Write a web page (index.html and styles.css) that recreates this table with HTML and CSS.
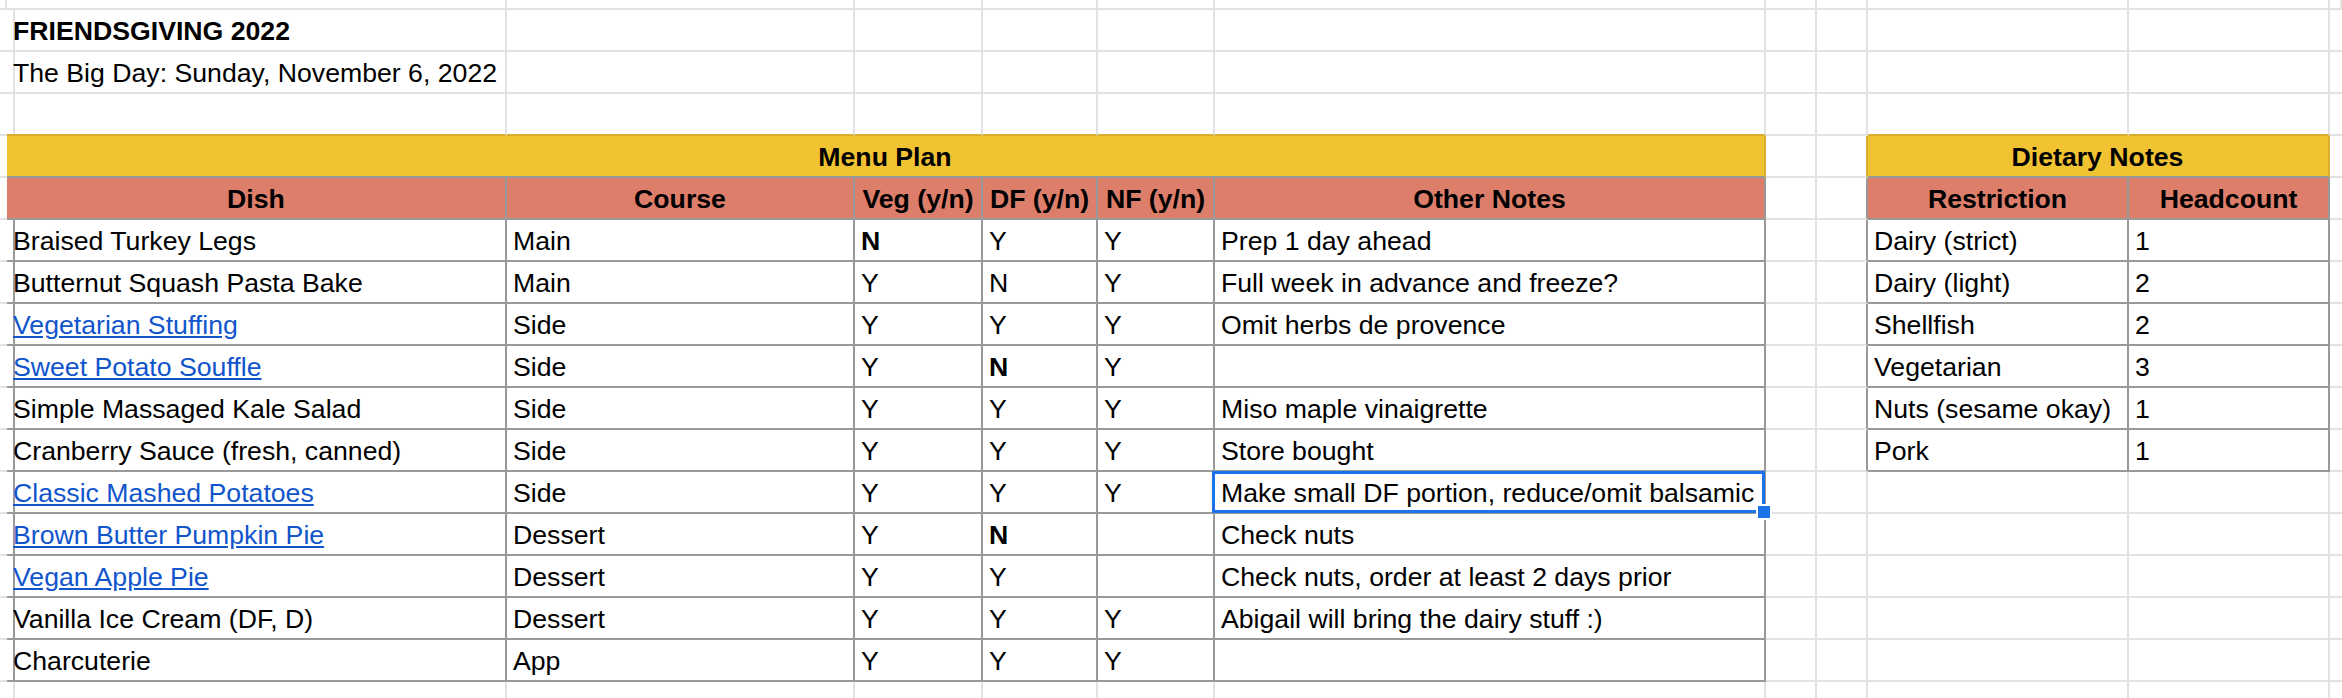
FILE: index.html
```html
<!DOCTYPE html>
<html lang="en">
<head>
<meta charset="utf-8">
<title>Friendsgiving 2022</title>
<link rel="stylesheet" href="styles.css">
</head>
<body>
<div class="sheet">
  <div class="row pre">
    <div class="c"></div><div class="c"></div><div class="c"></div><div class="c"></div><div class="c"></div><div class="c"></div><div class="c"></div><div class="c"></div><div class="c"></div><div class="c"></div><div class="c"></div><div class="c"></div>
  </div>
  <div class="row">
    <div class="c"></div><div class="c b">FRIENDSGIVING 2022</div><div class="c"></div><div class="c"></div><div class="c"></div><div class="c"></div><div class="c"></div><div class="c"></div><div class="c"></div><div class="c"></div><div class="c"></div><div class="c"></div>
  </div>
  <div class="row">
    <div class="c"></div><div class="c">The Big Day: Sunday, November 6, 2022</div><div class="c"></div><div class="c"></div><div class="c"></div><div class="c"></div><div class="c"></div><div class="c"></div><div class="c"></div><div class="c"></div><div class="c"></div><div class="c"></div>
  </div>
  <div class="row">
    <div class="c"></div><div class="c gt"></div><div class="c gt"></div><div class="c gt"></div><div class="c gt"></div><div class="c gt"></div><div class="c gt"></div><div class="c"></div><div class="c"></div><div class="c gt"></div><div class="c gt"></div><div class="c"></div>
  </div>
  <div class="row">
    <div class="c gl"></div><div class="c yl span6">Menu Plan</div><div class="c"></div><div class="c gl"></div><div class="c yl span2">Dietary Notes</div><div class="c"></div>
  </div>
  <div class="row">
    <div class="c gr"></div><div class="c sh">Dish</div><div class="c sh">Course</div><div class="c sh">Veg (y/n)</div><div class="c sh">DF (y/n)</div><div class="c sh">NF (y/n)</div><div class="c sh">Other Notes</div><div class="c"></div><div class="c gr"></div><div class="c sh">Restriction</div><div class="c sh">Headcount</div><div class="c"></div>
  </div>
  <div class="row">
    <div class="c gr"></div><div class="c t">Braised Turkey Legs</div><div class="c t">Main</div><div class="c t b">N</div><div class="c t">Y</div><div class="c t">Y</div><div class="c t">Prep 1 day ahead</div><div class="c"></div><div class="c gr"></div><div class="c t">Dairy (strict)</div><div class="c t">1</div><div class="c"></div>
  </div>
  <div class="row">
    <div class="c gr"></div><div class="c t">Butternut Squash Pasta Bake</div><div class="c t">Main</div><div class="c t">Y</div><div class="c t">N</div><div class="c t">Y</div><div class="c t">Full week in advance and freeze?</div><div class="c"></div><div class="c gr"></div><div class="c t">Dairy (light)</div><div class="c t">2</div><div class="c"></div>
  </div>
  <div class="row">
    <div class="c gr"></div><div class="c t"><a class="link" href="#">Vegetarian Stuffing</a></div><div class="c t">Side</div><div class="c t">Y</div><div class="c t">Y</div><div class="c t">Y</div><div class="c t">Omit herbs de provence</div><div class="c"></div><div class="c gr"></div><div class="c t">Shellfish</div><div class="c t">2</div><div class="c"></div>
  </div>
  <div class="row">
    <div class="c gr"></div><div class="c t"><a class="link" href="#">Sweet Potato Souffle</a></div><div class="c t">Side</div><div class="c t">Y</div><div class="c t b">N</div><div class="c t">Y</div><div class="c t"></div><div class="c"></div><div class="c gr"></div><div class="c t">Vegetarian</div><div class="c t">3</div><div class="c"></div>
  </div>
  <div class="row">
    <div class="c gr"></div><div class="c t">Simple Massaged Kale Salad</div><div class="c t">Side</div><div class="c t">Y</div><div class="c t">Y</div><div class="c t">Y</div><div class="c t">Miso maple vinaigrette</div><div class="c"></div><div class="c gr"></div><div class="c t">Nuts (sesame okay)</div><div class="c t">1</div><div class="c"></div>
  </div>
  <div class="row">
    <div class="c gr"></div><div class="c t">Cranberry Sauce (fresh, canned)</div><div class="c t">Side</div><div class="c t">Y</div><div class="c t">Y</div><div class="c t">Y</div><div class="c t">Store bought</div><div class="c"></div><div class="c gr"></div><div class="c t">Pork</div><div class="c t">1</div><div class="c"></div>
  </div>
  <div class="row">
    <div class="c gr"></div><div class="c t"><a class="link" href="#">Classic Mashed Potatoes</a></div><div class="c t">Side</div><div class="c t">Y</div><div class="c t">Y</div><div class="c t">Y</div><div class="c t sel">Make small DF portion, reduce/omit balsamic</div><div class="c"></div><div class="c"></div><div class="c"></div><div class="c"></div><div class="c"></div>
  </div>
  <div class="row">
    <div class="c gr"></div><div class="c t"><a class="link" href="#">Brown Butter Pumpkin Pie</a></div><div class="c t">Dessert</div><div class="c t">Y</div><div class="c t b">N</div><div class="c t"></div><div class="c t">Check nuts</div><div class="c"></div><div class="c"></div><div class="c"></div><div class="c"></div><div class="c"></div>
  </div>
  <div class="row">
    <div class="c gr"></div><div class="c t"><a class="link" href="#">Vegan Apple Pie</a></div><div class="c t">Dessert</div><div class="c t">Y</div><div class="c t">Y</div><div class="c t"></div><div class="c t">Check nuts, order at least 2 days prior</div><div class="c"></div><div class="c"></div><div class="c"></div><div class="c"></div><div class="c"></div>
  </div>
  <div class="row">
    <div class="c gr"></div><div class="c t">Vanilla Ice Cream (DF, D)</div><div class="c t">Dessert</div><div class="c t">Y</div><div class="c t">Y</div><div class="c t">Y</div><div class="c t">Abigail will bring the dairy stuff :)</div><div class="c"></div><div class="c"></div><div class="c"></div><div class="c"></div><div class="c"></div>
  </div>
  <div class="row">
    <div class="c gr"></div><div class="c t">Charcuterie</div><div class="c t">App</div><div class="c t">Y</div><div class="c t">Y</div><div class="c t">Y</div><div class="c t"></div><div class="c"></div><div class="c"></div><div class="c"></div><div class="c"></div><div class="c"></div>
  </div>
  <div class="row">
    <div class="c"></div><div class="c"></div><div class="c"></div><div class="c"></div><div class="c"></div><div class="c"></div><div class="c"></div><div class="c"></div><div class="c"></div><div class="c"></div><div class="c"></div><div class="c"></div>
  </div>
</div>
</body>
</html>
```

FILE: styles.css
```css
html, body {
  margin: 0;
  padding: 0;
  background: #ffffff;
  overflow: hidden;
}

body {
  width: 2342px;
  height: 698px;
  font-family: "Liberation Sans", Arial, sans-serif;
  font-size: 26.67px;
  color: #000000;
}

.sheet {
  display: flex;
  flex-direction: column;
}

.row {
  display: grid;
  grid-template-columns: 7px 500px 348px 128px 115px 117px 551px 51px 51px 261px 201px 1fr;
  height: 42px;
}

.row.pre {
  height: 10px;
}

.c {
  box-sizing: border-box;
  display: flex;
  align-items: flex-end;
  padding: 0 7px 4px 6px;
  line-height: 30px;
  white-space: nowrap;
  border-right: 2px solid #e2e2e2;
  border-bottom: 2px solid #e2e2e2;
  min-width: 0;
}

.row.pre .c {
  padding: 0;
}

.b {
  font-weight: bold;
}

/* gridline drawn over a filled cell edge */
.gt {
  border-bottom-color: #d9ae2d;
}

.gl {
  border-right-color: #d9ae2d;
}

/* table borders */
.gr {
  border-right-color: #999999;
}

.t {
  border-right-color: #999999;
  border-bottom-color: #999999;
}

.yl {
  background: #f1c232;
  border-right-color: #d9ae2d;
  border-bottom-color: #999999;
  font-weight: bold;
  justify-content: center;
}

.span6 {
  grid-column: span 6;
}

.span2 {
  grid-column: span 2;
}

.sh {
  background: #dd7e6b;
  border-right-color: #999999;
  border-bottom-color: #999999;
  font-weight: bold;
  justify-content: center;
  padding-left: 0;
  padding-right: 0;
}

.link {
  color: #1155cc;
  text-decoration: underline;
  text-underline-offset: 2px;
}

.sel {
  position: relative;
}

.sel::before {
  content: "";
  position: absolute;
  top: -1px;
  left: -3px;
  right: -1px;
  bottom: -1px;
  border: 3px solid #1a73e8;
  pointer-events: none;
}

.sel::after {
  content: "";
  position: absolute;
  right: -8px;
  bottom: -8px;
  width: 12px;
  height: 12px;
  background: #1a73e8;
  border: 2px solid #ffffff;
  z-index: 2;
}
```
